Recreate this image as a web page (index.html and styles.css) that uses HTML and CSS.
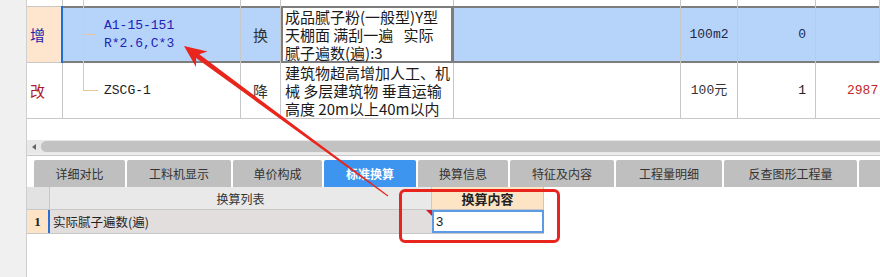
FILE: index.html
```html
<!DOCTYPE html>
<html lang="zh-CN">
<head>
    <meta charset="UTF-8">
    <title>标准换算</title>
    <link rel="stylesheet" href="styles.css">
</head>
<body>
<div class="app">
    <div class="side"></div>
    <div class="main">
        <!-- 定额列表 -->
        <div class="grid-top">
            <div class="row row-cut">
                <div class="c c1"></div>
                <div class="c c2 tree-pass"></div>
                <div class="c c3"></div>
                <div class="c c4"><div class="cut-text">刷界面处理剂一遍</div></div>
                <div class="c c5"></div>
                <div class="c c6"></div>
                <div class="c c7"></div>
                <div class="c c8"></div>
            </div>
            <div class="row row-sel">
                <div class="c c1 mark add">增</div>
                <div class="c c2 code tree-mid">A1-15-151<br>R*2.6,C*3</div>
                <div class="c c3 mid">换</div>
                <div class="c c4 name">成品腻子粉(一般型)Y型<br>天棚面 满刮一遍&nbsp;&nbsp;&nbsp;实际<br>腻子遍数(遍):3</div>
                <div class="c c5"></div>
                <div class="c c6 mono mid">100m2</div>
                <div class="c c7 mono right">0</div>
                <div class="c c8"></div>
            </div>
            <div class="row">
                <div class="c c1 mark edit">改</div>
                <div class="c c2 code tree-end">ZSCG-1</div>
                <div class="c c3 mid">降</div>
                <div class="c c4 name">建筑物超高增加人工、机<br>械 多层建筑物 垂直运输<br>高度 20m以上40m以内</div>
                <div class="c c5"></div>
                <div class="c c6 mono mid">100元</div>
                <div class="c c7 mono right">1</div>
                <div class="c c8 mono price">2987</div>
            </div>
        </div>

        <div class="blank"></div>

        <div class="hscroll">
            <span class="arr"></span>
            <span class="thumb"></span>
        </div>
        <div class="sep"></div>

        <div class="tabs">
            <div class="tab">详细对比</div>
            <div class="tab">工料机显示</div>
            <div class="tab">单价构成</div>
            <div class="tab active">标准换算</div>
            <div class="tab">换算信息</div>
            <div class="tab">特征及内容</div>
            <div class="tab">工程量明细</div>
            <div class="tab">反查图形工程量</div>
            <div class="tab"></div>
        </div>

        <!-- 换算列表 -->
        <div class="sub">
            <div class="sub-row sub-head">
                <div class="rh"></div>
                <div class="hc">换算列表</div>
                <div class="hc hl">换算内容</div>
            </div>
            <div class="sub-row sub-data">
                <div class="num">1</div>
                <div class="dc">实际腻子遍数(遍)</div>
                <div class="inp">3</div>
            </div>
        </div>
    </div>

    <div class="callout"></div>
    <svg class="pointer" width="880" height="277" viewBox="0 0 880 277">
        <polygon fill="#e8261e" points="184,46 207.5,51.5 199.3,54.3 388.3,195.6 387.7,196.4 196.1,58.1 196,67"/>
    </svg>
</div>
</body>
</html>
```

FILE: styles.css
```css
/* Page */
body {
    margin: 0;
    background: #fff;
    font-family: "Noto Sans CJK SC", sans-serif;
    color: #222;
}

.app {
    position: relative;
    display: flex;
    width: 880px;
    height: 277px;
    overflow: hidden;
}

.side {
    flex: none;
    width: 26px;
    background: #f0f0f0;
    border-right: 1px solid #cfcfcf;
}

.main {
    flex: 1;
    min-width: 0;
}

/* Top grid */
.row {
    display: grid;
    grid-template-columns: 36px 178px 40px 173px 227px 57px 78px 1fr;
    height: 56px;
    border-bottom: 1px solid #c8c8c8;
    box-sizing: border-box;
}

.row-cut {
    height: 6px;
    border-bottom: none;
}

.row-sel {
    height: 57px;
    border-bottom: none;
}

.c {
    box-sizing: border-box;
    border-right: 1px solid #c8c8c8;
    display: flex;
    flex-direction: column;
    justify-content: center;
    font-size: 15px;
    line-height: 18px;
    white-space: nowrap;
    overflow: hidden;
    position: relative;
}

.row-sel .c {
    background: #b6d4fa;
    box-shadow: inset 0 2px 0 #7d7d7d, inset 0 -2px 0 #7d7d7d;
}

.row-sel .c1 {
    background: #fde6cd;
    border-right: 2px solid #1b6fdd;
    box-shadow: inset 0 1px 0 #c8c8c8, inset 0 -1px 0 #c8c8c8;
}

.row-sel .c4 {
    background: #fff;
    border-right-color: #7d7d7d;
    box-shadow: inset 0 0 0 2px #7d7d7d;
}

.cut-text {
    margin-top: -26px;
    padding-left: 4px;
    color: #333;
}

.mark {
    padding-left: 3px;
}

.add {
    color: #1f22a8;
}

.edit {
    color: #b01b2b;
}

.code {
    padding-left: 41px;
    font-family: "Liberation Mono", monospace;
    font-size: 13px;
}

.row-sel .code {
    color: #1c24b4;
}

.mid {
    align-items: center;
    color: #333;
}

.name {
    padding-left: 4px;
    color: #1a1a1a;
}

.mono {
    font-family: "Liberation Mono", "Noto Sans CJK SC", monospace;
    font-size: 13px;
}

.row-sel .mono {
    color: #1c2a4c;
}

.right {
    align-items: flex-end;
    padding-right: 9px;
}

.price {
    padding-left: 31px;
    color: #c0282a;
    border-right: none;
}

/* tree lines */
.tree-pass::before,
.tree-mid::before,
.tree-end::before {
    content: "";
    position: absolute;
    left: 20px;
    top: 0;
    width: 1px;
    height: 100%;
    background: #f0c88e;
}

.tree-end::before {
    height: 27px;
}

.tree-mid::after,
.tree-end::after {
    content: "";
    position: absolute;
    left: 20px;
    top: 28px;
    width: 13px;
    height: 1px;
    background: #e8c596;
}

.tree-end::after {
    top: 27px;
    width: 15px;
}

.blank {
    height: 21px;
}

/* Scrollbar */
.hscroll {
    display: flex;
    align-items: center;
    height: 13px;
    background: #e8e8e8;
}

.arr {
    flex: none;
    width: 0;
    height: 0;
    margin: 0 5px 0 5px;
    border-top: 3px solid transparent;
    border-bottom: 3px solid transparent;
    border-right: 4px solid #666;
}

.thumb {
    flex: 1;
    height: 11px;
    background: #c2c2c2;
    border-radius: 6px 0 0 6px;
}

.sep {
    height: 2px;
    background: #ececec;
    border-bottom: 1px solid #c8c8c8;
    margin-bottom: 4px;
}

/* Tabs */
.tabs {
    display: flex;
    gap: 2px;
    height: 27px;
    padding-left: 7px;
}

.tab {
    flex: none;
    display: flex;
    align-items: center;
    justify-content: center;
    background: #bfbfbf;
    border-radius: 2px 2px 0 0;
    font-size: 12px;
    color: #333;
}

.tab:nth-child(1) { width: 91px; }
.tab:nth-child(2) { width: 104px; }
.tab:nth-child(3) { width: 89px; }
.tab:nth-child(4) { width: 92px; }
.tab:nth-child(5) { width: 90px; }
.tab:nth-child(6) { width: 104px; }
.tab:nth-child(7) { width: 106px; }
.tab:nth-child(8) { width: 133px; }
.tab:nth-child(9) { width: 40px; }

.tab.active {
    background: #3d95f0;
    color: #fff;
    font-weight: bold;
}

/* Bottom grid */
.sub-row {
    display: grid;
    grid-template-columns: 23px 382px 112px;
    box-sizing: border-box;
    border-bottom: 1px solid #c8c8c8;
    width: 517px;
}

.sub-head {
    height: 23px;
}

.sub-data {
    height: 24px;
}

.rh {
    background: #e2e2e2;
    border-right: 1px solid #c8c8c8;
}

.hc {
    display: flex;
    align-items: center;
    justify-content: center;
    background: #e9e9e9;
    border-right: 1px solid #c8c8c8;
    font-size: 12px;
    color: #333;
}

.hc.hl {
    background: #fce4c4;
    font-size: 13px;
    font-weight: bold;
    color: #222;
}

.num {
    display: flex;
    align-items: center;
    justify-content: center;
    background: #fde4c6;
    border-right: 2px solid #2a6fd6;
    font-family: "Liberation Serif", serif;
    font-weight: bold;
    font-size: 13px;
}

.dc {
    position: relative;
    display: flex;
    align-items: center;
    padding-left: 3px;
    background: #e2dede;
    font-size: 12.5px;
    color: #222;
}

.dc::after {
    content: "";
    position: absolute;
    right: 0;
    top: 0;
    border-top: 6px solid #d11c2a;
    border-left: 6px solid transparent;
}

.inp {
    display: flex;
    align-items: center;
    box-sizing: border-box;
    padding-left: 2px;
    background: #fff;
    border: 2px solid #5c9ae6;
    font-family: "Liberation Sans", sans-serif;
    font-size: 13px;
}

/* Annotation */
.callout {
    position: absolute;
    left: 399px;
    top: 189px;
    width: 161px;
    height: 54px;
    box-sizing: border-box;
    border: 3px solid #e8241c;
    border-radius: 6px;
}

.pointer {
    position: absolute;
    left: 0;
    top: 0;
    pointer-events: none;
}
```
